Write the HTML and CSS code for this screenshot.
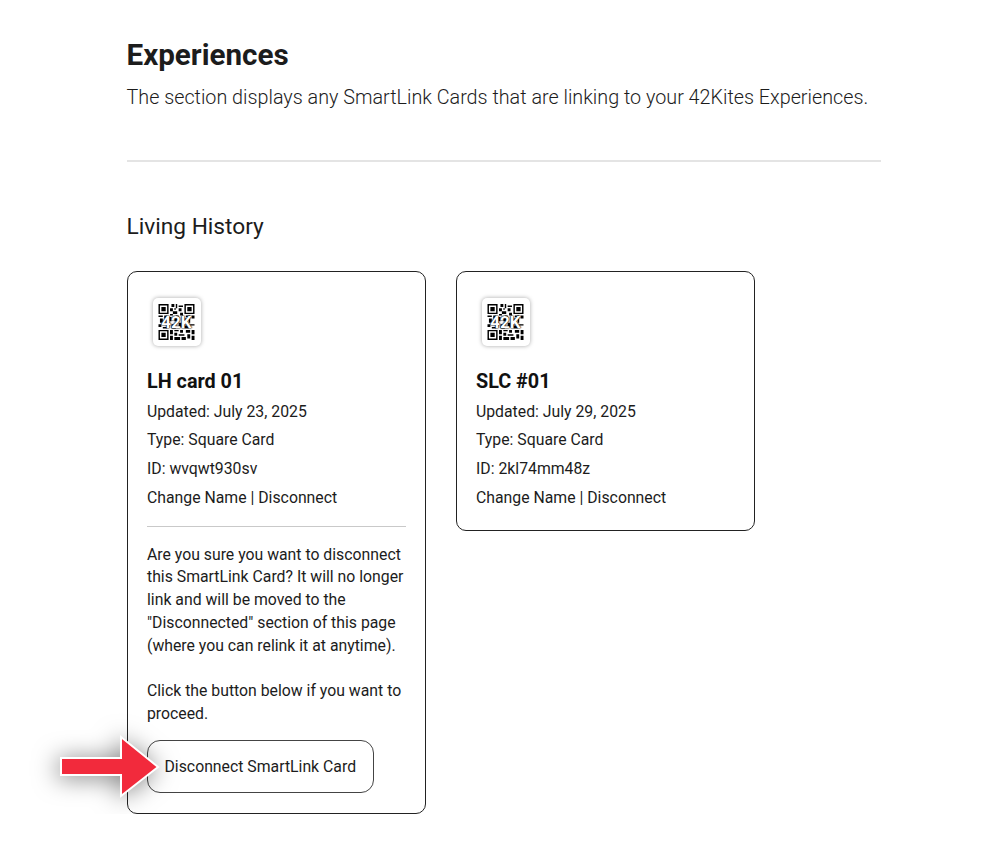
FILE: index.html
```html
<!DOCTYPE html>
<html lang="en">
<head>
    <meta charset="UTF-8">
    <meta name="viewport" content="width=device-width, initial-scale=1.0">
    <title>Experiences</title>
    <link rel="stylesheet" href="styles.css">
</head>
<body>
    <main class="page">
        <header class="page-head">
            <h1 class="page-title">Experiences</h1>
            <p class="page-intro">The section displays any SmartLink Cards that are linking to your 42Kites Experiences.</p>
        </header>

        <hr class="page-rule">

        <h2 class="group-title">Living History</h2>

        <div class="card-list">
            <article class="card">
                <div class="qr-box">
                    <svg class="qr-img" viewBox="0 0 25 25" aria-hidden="true">
                        <path fill-rule="evenodd" d="M0 0h7v7H0zM1 1v5h5V1zM2 2h3v3H2zM18 0h7v7h-7zM19 1v5h5V1zM20 2h3v3h-3zM0 18h7v7H0zM1 19v5h5v-5zM2 20h3v3H2z"/>
                        <path d="M9 0h2v2H9zM12 0h1v3h-1zM14 1h3v1h-3zM8 3h2v2H8zM11 3h1v1h-1zM14 3h2v2h-2zM10 5h3v2h-3zM15 6h2v2h-2zM8 7h2v1H8zM0 8h3v1H0zM4 8h2v2H4zM12 8h2v1h-2zM19 8h3v1h-3zM23 8h2v2h-2zM1 10h2v3H1zM7 9h2v3H7zM11 10h2v2h-2zM17 10h2v3h-2zM21 10h1v3h-1zM0 14h2v2H0zM5 13h3v1H5zM9 14h3v3H9zM14 13h2v3h-2zM22 14h3v1h-3zM3 16h3v1H3zM18 15h3v2h-3zM8 18h2v3H8zM11 18h3v1h-3zM15 18h2v2h-2zM19 18h3v2h-3zM23 18h2v3h-2zM11 20h2v2h-2zM14 21h4v1h-4zM20 21h2v3h-2zM8 22h2v3H8zM11 23h4v2h-4zM16 23h3v2h-3zM23 22h2v3h-2z"/>
                    </svg>
                    <span class="qr-label">42K</span>
                </div>
                <h3 class="card-name">LH card 01</h3>
                <p class="card-line">Updated: July 23, 2025</p>
                <p class="card-line">Type: Square Card</p>
                <p class="card-line">ID: wvqwt930sv</p>
                <p class="card-line">Change Name | Disconnect</p>

                <div class="confirm">
                    <p class="confirm-text">Are you sure you want to disconnect this SmartLink Card? It will no longer link and will be moved to the "Disconnected" section of this page (where you can relink it at anytime).</p>
                    <p class="confirm-text">Click the button below if you want to proceed.</p>
                    <div class="confirm-action">
                        <button class="disconnect-button">Disconnect SmartLink Card</button>
                        <svg class="callout-arrow" width="110" height="76" viewBox="0 0 110 76" aria-hidden="true">
                            <path d="M5 29H65V8L102 38L65 67V46H5Z" fill="#f22a3c" stroke="#fff" stroke-width="2"/>
                        </svg>
                    </div>
                </div>
            </article>

            <article class="card card-short">
                <div class="qr-box">
                    <svg class="qr-img" viewBox="0 0 25 25" aria-hidden="true">
                        <path fill-rule="evenodd" d="M0 0h7v7H0zM1 1v5h5V1zM2 2h3v3H2zM18 0h7v7h-7zM19 1v5h5V1zM20 2h3v3h-3zM0 18h7v7H0zM1 19v5h5v-5zM2 20h3v3H2z"/>
                        <path d="M9 0h2v2H9zM12 0h1v3h-1zM14 1h3v1h-3zM8 3h2v2H8zM11 3h1v1h-1zM14 3h2v2h-2zM10 5h3v2h-3zM15 6h2v2h-2zM8 7h2v1H8zM0 8h3v1H0zM4 8h2v2H4zM12 8h2v1h-2zM19 8h3v1h-3zM23 8h2v2h-2zM1 10h2v3H1zM7 9h2v3H7zM11 10h2v2h-2zM17 10h2v3h-2zM21 10h1v3h-1zM0 14h2v2H0zM5 13h3v1H5zM9 14h3v3H9zM14 13h2v3h-2zM22 14h3v1h-3zM3 16h3v1H3zM18 15h3v2h-3zM8 18h2v3H8zM11 18h3v1h-3zM15 18h2v2h-2zM19 18h3v2h-3zM23 18h2v3h-2zM11 20h2v2h-2zM14 21h4v1h-4zM20 21h2v3h-2zM8 22h2v3H8zM11 23h4v2h-4zM16 23h3v2h-3zM23 22h2v3h-2z"/>
                    </svg>
                    <span class="qr-label">42K</span>
                </div>
                <h3 class="card-name">SLC #01</h3>
                <p class="card-line">Updated: July 29, 2025</p>
                <p class="card-line">Type: Square Card</p>
                <p class="card-line">ID: 2kl74mm48z</p>
                <p class="card-line">Change Name | Disconnect</p>
            </article>
        </div>
    </main>
</body>
</html>
```

FILE: styles.css
```css
* {
    margin: 0;
    padding: 0;
    box-sizing: border-box;
}

body {
    font-family: Roboto, 'Liberation Sans', sans-serif;
    background: #fff;
    color: #1c1c1c;
}

.page {
    width: 754px;
    margin-left: 126.5px;
    padding-top: 37px;
}

.page-title {
    font-size: 29.6px;
    line-height: 36px;
    font-weight: 700;
}

.page-intro {
    margin-top: 13px;
    font-size: 19.75px;
    line-height: 24px;
    font-weight: 300;
}

.page-rule {
    margin-top: 50px;
    border: none;
    border-top: 2px solid #e4e4e4;
}

.group-title {
    margin-top: 51px;
    font-size: 22.7px;
    line-height: 28px;
    font-weight: 400;
}

.card-list {
    display: flex;
    align-items: flex-start;
    gap: 30px;
    margin-top: 30px;
    padding-left: 0.5px;
}

.card {
    width: 299px;
    height: 543px;
    padding: 25.5px 19px 0;
    border: 1.5px solid #222;
    border-radius: 10px;
}

.card-short {
    height: 260px;
}

.qr-box {
    position: relative;
    width: 48px;
    height: 48px;
    margin-left: 5.5px;
    padding: 6px 5.5px;
    border-radius: 5px;
    background: #fff;
    box-shadow: 0 0 4px rgba(0, 0, 0, 0.35);
}

.qr-img {
    display: block;
    width: 37px;
    height: 36px;
    filter: blur(0.35px);
}

.qr-label {
    position: absolute;
    left: 0;
    right: 0;
    top: 15px;
    text-align: center;
    font-size: 17px;
    line-height: 18px;
    font-weight: 700;
    color: #fff;
    text-shadow: 0 0 1px #000, 0 0 1px #000, 0 0 2px #000;
}

.card-name {
    margin-top: 24px;
    font-size: 19.8px;
    line-height: 24px;
    font-weight: 700;
    color: #111;
}

.card-line {
    margin-top: 5.7px;
    font-size: 15.8px;
    line-height: 23px;
}

.card-name + .card-line {
    margin-top: 6px;
}

.confirm {
    margin-top: 17px;
    padding-top: 17px;
    border-top: 1px solid #c9c9c9;
}

.confirm-text {
    margin-bottom: 22.5px;
    font-size: 15.8px;
    line-height: 22.8px;
}

.confirm-action {
    position: relative;
    margin-top: -8px;
}

.disconnect-button {
    display: block;
    width: 226.5px;
    height: 53px;
    padding-left: 16.5px;
    border: 1.5px solid #444;
    border-radius: 13px;
    background: #fff;
    color: #1c1c1c;
    font-family: Roboto, 'Liberation Sans', sans-serif;
    font-size: 15.8px;
    text-align: left;
}

.callout-arrow {
    position: absolute;
    left: -91.5px;
    top: -11px;
    filter: drop-shadow(-2px 2px 12px rgba(0, 0, 0, 0.5));
}
```
